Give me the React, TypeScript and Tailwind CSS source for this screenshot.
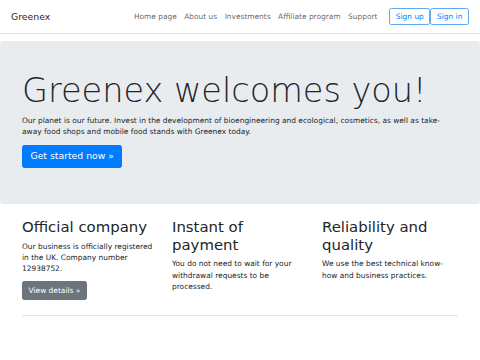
const navLinks = ["Home page", "About us", "Investments", "Affiliate program", "Support"]

const features = [
    {
        title: "Official company",
        text: "Our business is officially registered in the UK. Company number 12938752.",
        button: true,
    },
    {
        title: "Instant of payment",
        text: "You do not need to wait for your withdrawal requests to be processed.",
        button: false,
    },
    {
        title: "Reliability and quality",
        text: "We use the best technical know-how and business practices.",
        button: false,
    },
]

export default function App() {
    return (
        <div className="min-h-[360px] overflow-hidden bg-white font-['DejaVu_Sans',sans-serif] text-[7.44px] leading-[1.5] text-[#212529]">
            <nav className="flex h-[34px] items-center border-b border-[#e3e3e3] px-[11px]">
                <a className="text-[9.3px] leading-[1.5] text-black/90">Greenex</a>
                <ul className="ml-auto flex">
                    {navLinks.map((item, index) => {
                        return (
                            <li key={index}>
                                <a className="px-[3.72px] text-black/65">{item}</a>
                            </li>
                        )
                    })}
                </ul>
                <div className="ml-[8px] flex">
                    <a className="rounded-[2.3px] border border-[#5fa8f7] px-[5.6px] py-[2.3px] text-[#007bff]">Sign up</a>
                    <a className="rounded-[2.3px] border border-[#5fa8f7] px-[5.6px] py-[2.3px] text-[#007bff]">Sign in</a>
                </div>
            </nav>

            <div className="mt-[7px] rounded-[3px] bg-[#e9ecef] px-[22px] pt-[30px] pb-[36px]">
                <h1 className="mb-[3.7px] text-[33.5px] font-extralight leading-[1.2]">Greenex welcomes you!</h1>
                <p className="mb-[7.44px]">Our planet is our future. Invest in the development of bioengineering and ecological, cosmetics, as well as take-away food shops and mobile food stands with Greenex today.</p>
                <a className="inline-block rounded-[2.3px] border border-[#007bff] bg-[#007bff] px-[7.44px] py-[3.72px] text-[9.3px] leading-[1.5] text-white">Get started now »</a>
            </div>

            <div className="mx-[22px] mt-[15px] grid grid-cols-3 gap-x-[14px]">
                {features.map((item, index) => {
                    return (
                        <div key={index}>
                            <h2 className="mb-[3.7px] text-[14.9px] leading-[1.2]">{item.title}</h2>
                            <p className="mb-[7.44px]">{item.text}</p>
                            {item.button && (
                                <a className="inline-block rounded-[2.3px] border border-[#6c757d] bg-[#6c757d] px-[5.6px] py-[2.8px] text-white">View details »</a>
                            )}
                        </div>
                    )
                })}
            </div>

            <hr className="mx-[22px] mt-[15px] border-t border-black/10" />
        </div>
    )
}
